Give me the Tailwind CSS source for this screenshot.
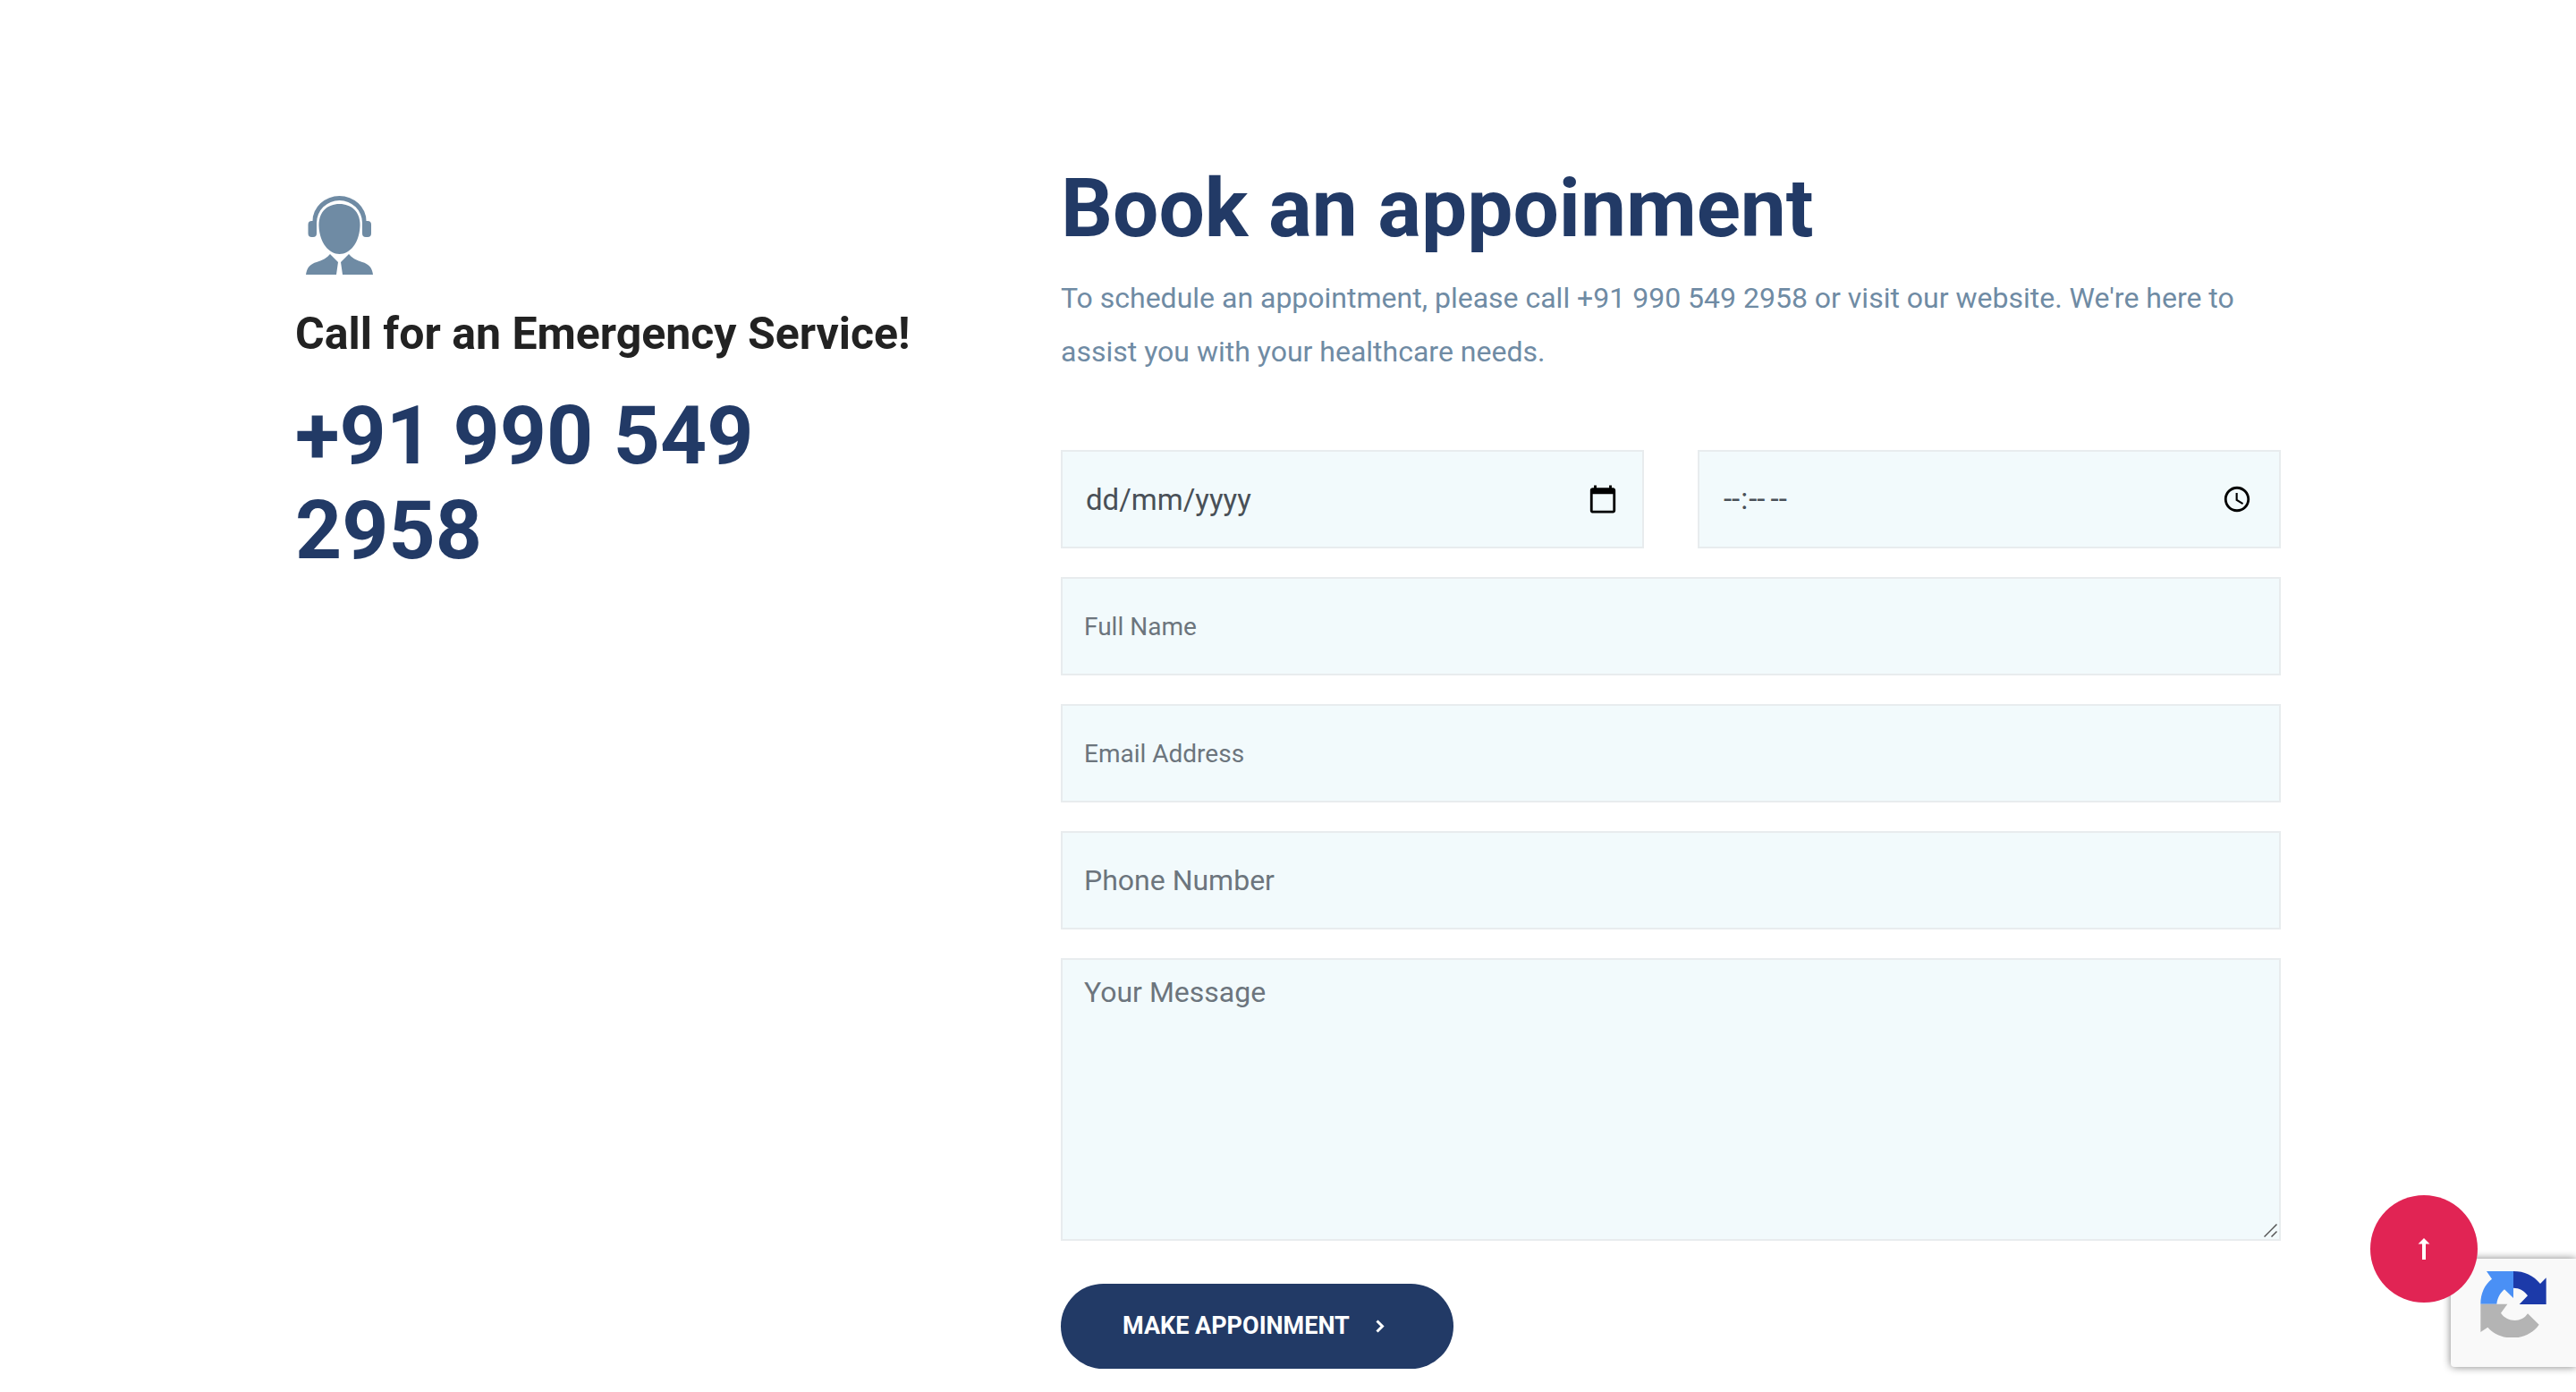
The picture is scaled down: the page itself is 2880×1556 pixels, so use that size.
<!DOCTYPE html>
<html lang="en">
<head>
    <meta charset="UTF-8">
    <meta name="viewport" content="width=device-width, initial-scale=1.0">
    <title>Book an appoinment</title>
    <script src="https://cdn.jsdelivr.net/npm/@tailwindcss/browser@4"></script>
</head>
<body class="bg-white font-[Roboto,sans-serif] text-[32px] text-[#6f8ba4]">

    <section class="max-w-[2280px] mx-auto px-[30px] pt-[180px] pb-[26px] flex">

        <!-- Emergency contact -->
        <div class="w-1/3 pt-[39px] pr-[40px]">
            <svg class="ml-[12px] w-[75px] h-[88px]" viewBox="0 0 75 88" fill="#6f8ba4" aria-hidden="true">
                <path d="M7.500 28A30 28 0 0 1 67.500 28H69a4 4 0 0 1 4 4v10a4 4 0 0 1-4 4H67a4 4 0 0 1-4-4V30A25.500 25 0 0 0 12 30v12a4 4 0 0 1-4 4H6.500a4 4 0 0 1-4-4V32a4 4 0 0 1 4-4z"/>
                <path d="M37.500 9C51 9 60.500 18 60.500 32C60.500 51 50 65 37.500 65S14.500 51 14.500 32C14.500 18 24 9 37.500 9z"/>
                <path d="M27 65l9 9-2 14H0c1-8 5-12 12-14 7-2 12-5 15-9zM48 65l-9 9 2 14h34c-1-8-5-12-12-14-7-2-12-5-15-9z"/>
            </svg>
            <h4 class="mt-[36px] text-[50px] leading-[60px] font-bold text-[#222222] whitespace-nowrap">Call for an Emergency Service!</h4>
            <h3 class="mt-[31px] text-[91px] leading-[106px] font-bold text-[#223a66]">+91 990 549 2958</h3>
        </div>

        <!-- Appointment form -->
        <div class="w-2/3 pl-[116px]">
            <h2 class="text-[91px] leading-[106px] font-bold text-[#223a66]">Book an appoinment</h2>
            <p class="mt-[17px] leading-[60px]">To schedule an appointment, please call +91 990 549 2958 or visit our website. We're here to assist you with your healthcare needs.</p>

            <form class="mt-[80px]" action="#">
                <div class="grid grid-cols-2 gap-x-[60px] gap-y-[32px]">
                    <div class="relative">
                        <input type="text" aria-label="Date" placeholder="dd/mm/yyyy" class="block w-full h-[110px] px-[26px] border-2 border-[#e8ecee] bg-[#f2fafc] text-[33px] placeholder:text-[#495057]">
                        <button type="button" aria-label="Open calendar" class="absolute inset-y-0 right-[29px] my-auto size-[34px]">
                            <svg viewBox="0 0 24 24" class="size-full" fill="#000"><path d="M20 3h-1V1h-2v2H7V1H5v2H4c-1.100 0-2 .9-2 2v16c0 1.100.9 2 2 2h16c1.100 0 2-.9 2-2V5c0-1.100-.9-2-2-2zm0 18H4V8h16v13z"/></svg>
                        </button>
                    </div>
                    <input type="time" aria-label="Time" class="block w-full h-[110px] px-[26px] border-2 border-[#e8ecee] bg-[#f2fafc] text-[33px] text-[#495057]">
                    <input type="text" aria-label="Full Name" placeholder="Full Name" class="col-span-2 h-[110px] px-[24px] border-2 border-[#e8ecee] bg-[#f2fafc] text-[28px] placeholder:text-[#6c757d]">
                    <input type="email" aria-label="Email Address" placeholder="Email Address" class="col-span-2 h-[110px] px-[24px] border-2 border-[#e8ecee] bg-[#f2fafc] text-[28px] placeholder:text-[#6c757d]">
                    <input type="tel" aria-label="Phone Number" placeholder="Phone Number" class="col-span-2 h-[110px] px-[24px] border-2 border-[#e8ecee] bg-[#f2fafc] placeholder:text-[#6c757d]">
                    <div class="col-span-2 relative">
                        <textarea rows="6" aria-label="Your Message" placeholder="Your Message" class="block w-full h-[316px] px-[24px] py-[12px] border-2 border-[#e8ecee] bg-[#f2fafc] leading-[48px] resize-none placeholder:text-[#6c757d]"></textarea>
                        <svg class="absolute right-[4px] bottom-[4px] size-[15px]" viewBox="0 0 15 15" stroke="#555" stroke-width="1.500" aria-hidden="true"><path d="M.5 14.500l14-14M8.500 14.500l6-6"/></svg>
                    </div>
                </div>
                <button type="submit" class="mt-[48px] h-[95px] pl-[69px] pr-[77px] flex items-center gap-[29px] rounded-full bg-[#223a66] text-white text-[27px] font-bold uppercase">
                    Make appoinment
                    <svg class="w-[10px] h-[15px]" viewBox="0 0 10 15" fill="none" stroke="#fff" stroke-width="3" aria-hidden="true"><path d="M1.500 1.500l6 6-6 6"/></svg>
                </button>
            </form>
        </div>
    </section>

    <!-- reCAPTCHA badge -->
    <div class="fixed right-0 bottom-[28px] w-[140px] h-[121px] pl-[33px] pt-[14px] rounded-l-[4px] bg-[#f9f9f9] shadow-[0_0_10px_gray]">
        <svg class="size-[74px]" viewBox="0 0 220 222" role="img" aria-label="reCAPTCHA">
            <path fill="#4a90f5" d="M20 0h90v90L80 61C66 72 56 90 54 110H0C0 75 13 45 38 26z"/>
            <path fill="#1c3aa9" d="M110 0c37 0 67 14 90 42l20-20v89h-90l28-29C147 65 130 56 110 56z"/>
            <path fill="#b4b4b4" d="M0 110h90l-22 30c17 28 68 37 90 2l38 37c-41 58-129 58-172 9L0 204z"/>
        </svg>
    </div>

    <!-- Back to top -->
    <a href="#" aria-label="Back to top" class="fixed right-[110px] bottom-[100px] size-[120px] flex items-center justify-center rounded-full bg-[#e12454]">
        <svg class="w-[14px] h-[24px]" viewBox="0 0 14 24" aria-hidden="true"><path fill="#fff" d="M7 0l6.500 6.500H9V24H5V6.500H.5z"/></svg>
    </a>

</body>
</html>
